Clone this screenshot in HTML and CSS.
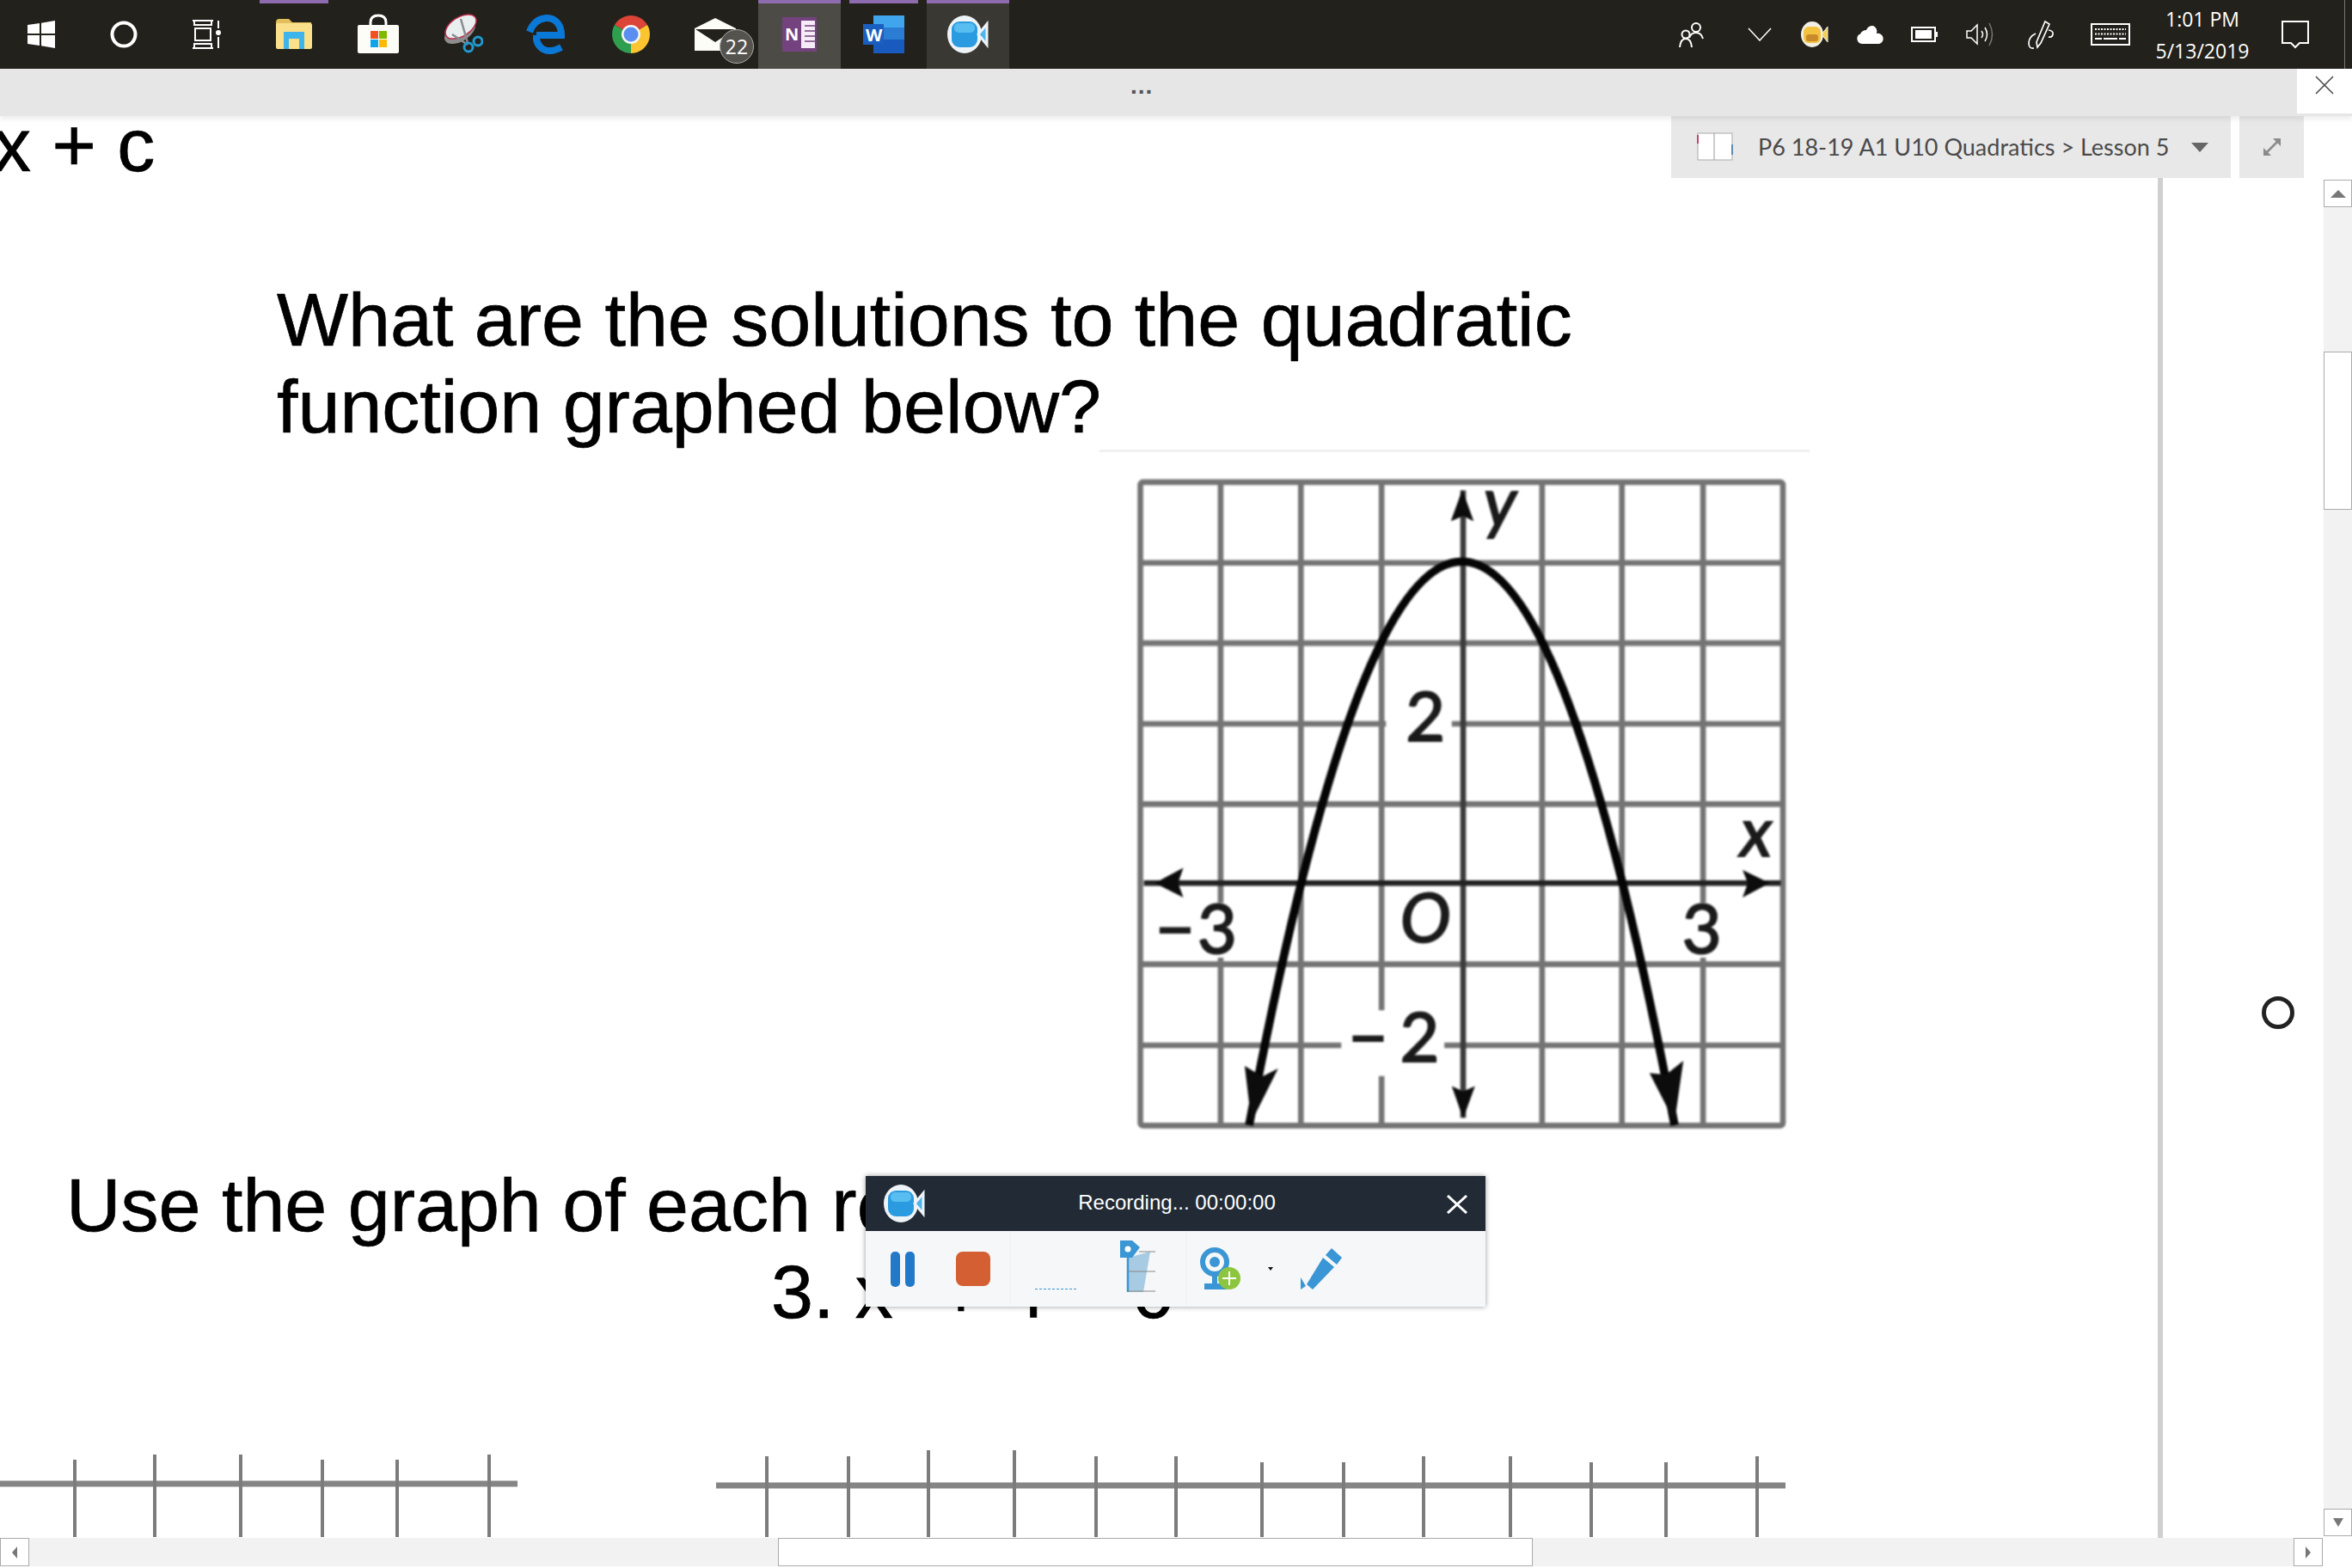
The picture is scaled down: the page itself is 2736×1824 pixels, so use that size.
FILE: index.html
```html
<!DOCTYPE html>
<html lang="en">
<head>
  <meta charset="UTF-8" />
  <title>OneNote - Lesson 5</title>
  <link rel="stylesheet" href="styles.css">
</head>
<body>
  <svg class="defs" width="0" height="0">
    <symbol id="rec-logo" viewBox="0 0 48 48">
      <ellipse cx="20" cy="24" rx="20" ry="22" fill="#eef3f7"/>
      <rect x="5" y="9" width="30" height="30" rx="9" fill="#2a9be0"/>
      <rect x="8" y="11" width="24" height="11" rx="5" fill="#58bdf0"/>
      <polygon points="36,24 46,12 46,36" fill="#4db4ec" stroke="#eef3f7" stroke-width="3"/>
    </symbol>
  </svg>

  <div class="app">
    <div class="taskbar">
      <div class="task-icon">
        <svg width="48" height="48" viewBox="0 0 48 48"><path fill="#fff" d="M8 13l14-2v12H8zM24 10.700l16-2.700v15H24zM8 25h14v12L8 35zM24 25h16v15l-16-2.700z"/></svg>
      </div>
      <div class="task-icon">
        <svg width="48" height="48" viewBox="0 0 48 48"><circle cx="24" cy="24" r="13.500" fill="none" stroke="#fff" stroke-width="4"/></svg>
      </div>
      <div class="task-icon">
        <svg width="48" height="48" viewBox="0 0 48 48" fill="none" stroke="#fff" stroke-width="2"><path d="M8 8h24M8 40h24M10 8v5h20V8M10 40v-5h20v5"/><rect x="11" y="17" width="18" height="14"/><path d="M38 8v9M38 27v13"/><circle cx="38" cy="22" r="2" fill="#fff"/></svg>
      </div>

      <div class="task-icon run first-pinned">
        <svg width="48" height="48" viewBox="0 0 48 48"><path fill="#e3bf5c" d="M3 10q0-4 4-4h11l4 4h22v6H3z"/><rect x="3" y="11" width="42" height="30" rx="2" fill="#fbe08c"/><path fill="#3fb4ea" d="M12 21h24v20h-6v-12H18v12h-6z"/></svg>
      </div>
      <div class="task-icon">
        <svg width="48" height="48" viewBox="0 0 48 48"><path fill="none" stroke="#fff" stroke-width="3" d="M15 18v-8q0-8 9-8t9 8v8"/><rect x="0" y="13" width="48" height="33" rx="2" fill="#fdfdf8"/><rect x="15" y="20" width="9" height="9" fill="#f25022"/><rect x="25" y="20" width="9" height="9" fill="#7fba00"/><rect x="15" y="30" width="9" height="9" fill="#0ea5e8"/><rect x="25" y="30" width="9" height="9" fill="#ffb900"/></svg>
      </div>
      <div class="task-icon">
        <svg width="48" height="48" viewBox="0 0 48 48"><ellipse cx="21" cy="21" rx="20" ry="11" transform="rotate(-32 21 21)" fill="#8d8d8d"/><ellipse cx="22" cy="15" rx="20" ry="11" transform="rotate(-32 22 15)" fill="#e9efef" stroke="#bb2f4c" stroke-width="1.500"/><path d="M22 6l8 28M12 24l18 12" stroke="#8a8a90" stroke-width="2.500" fill="none"/><circle cx="31" cy="39" r="5" fill="none" stroke="#1f9bd1" stroke-width="3"/><circle cx="42" cy="32" r="5" fill="none" stroke="#1f9bd1" stroke-width="3"/></svg>
      </div>
      <div class="task-icon">
        <svg width="48" height="48" viewBox="0 0 48 48" fill="none" stroke="#0a78d7" stroke-width="8"><path d="M12 25h29c0-13-8-21-18-20C13 6 7 13 4 21"/><path d="M12 25c-1 11 7 19 17 18 4 0 8-2 12-4"/></svg>
      </div>
      <div class="task-icon">
        <svg width="48" height="48" viewBox="0 0 48 48"><path fill="#db4437" d="M24 24L5 13A22 22 0 0 1 43 13z"/><path fill="#fbc52f" d="M24 24L43 13A22 22 0 0 1 24 46z"/><path fill="#2f9e4f" d="M24 24L24 46A22 22 0 0 1 5 13z"/><circle cx="24" cy="24" r="11" fill="#f4f4f4"/><circle cx="24" cy="24" r="8.500" fill="#5a8ef0"/></svg>
      </div>
      <div class="task-icon">
        <svg width="48" height="48" viewBox="0 0 48 48"><path fill="#fdfdf8" d="M0 17L24 5l24 12v26H0z"/><path fill="#23211b" d="M1 18h46L24 33z"/></svg>
        <span class="mail-badge">22</span>
      </div>
      <div class="task-icon run active">
        <svg width="48" height="48" viewBox="0 0 48 48"><rect x="4" y="4" width="40" height="40" fill="#73427f"/><rect x="26" y="8" width="16" height="32" fill="#f5ecf8"/><path d="M30 14h12M30 20h12M30 26h12M30 32h12" stroke="#73427f" stroke-width="1.500"/></svg>
        <span class="app-letter onenote-n">N</span>
      </div>
      <div class="task-icon run">
        <svg width="48" height="48" viewBox="0 0 48 48"><rect x="12" y="2" width="36" height="14" fill="#41a5ee"/><rect x="12" y="16" width="36" height="14" fill="#2b7cd3"/><rect x="12" y="30" width="36" height="16" fill="#185abd"/><rect x="0" y="12" width="24" height="24" fill="#1a5fc0"/></svg>
        <span class="app-letter word-w">W</span>
      </div>
      <div class="task-icon run active recorder-tab">
        <svg width="48" height="48"><use href="#rec-logo"/></svg>
      </div>

      <div class="tray">
        <div class="tray-slot people">
          <svg width="32" height="32" viewBox="0 0 32 32" fill="none" stroke="#fff" stroke-width="2"><circle cx="21" cy="8" r="5"/><path d="M13 20q2-6 8-6t8 7"/><circle cx="9" cy="16" r="4.500"/><path d="M2 31q1-10 7-10t7 10"/></svg>
        </div>
        <div class="tray-slot chevron">
          <svg width="28" height="16" viewBox="0 0 28 16" fill="none" stroke="#fff" stroke-width="1.500"><path d="M1 1l13 14L27 1"/></svg>
        </div>
        <div class="tray-slot">
          <svg width="32" height="30" viewBox="0 0 32 30"><ellipse cx="13" cy="15" rx="13" ry="15" fill="#f2f0e6"/><rect x="3" y="6" width="20" height="19" rx="6" fill="#f3c23f"/><rect x="6" y="15" width="14" height="8" rx="3" fill="#c98a2a"/><polygon points="24,15 31,6 31,24" fill="#f5cf55" stroke="#f2f0e6"/></svg>
        </div>
        <div class="tray-slot">
          <svg width="34" height="22" viewBox="0 0 34 22"><path fill="#fff" d="M8 22a6 6 0 0 1-2-11.500A8 8 0 0 1 13 6 8 8 0 0 1 21 1a7 7 0 0 1 4 9 6 6 0 0 1 3 12z"/></svg>
        </div>
        <div class="tray-slot">
          <svg width="32" height="18" viewBox="0 0 32 18"><rect x="1" y="1" width="27" height="16" fill="none" stroke="#fff" stroke-width="2"/><rect x="5" y="4" width="19" height="10" fill="#fff"/><rect x="29" y="6" width="2" height="6" fill="#fff"/></svg>
        </div>
        <div class="tray-slot">
          <svg width="32" height="30" viewBox="0 0 32 30" fill="none" stroke="#fff" stroke-width="1.500"><path d="M1 11h5l7-7v22l-7-7H1z"/><path d="M18 11q3 4 0 8M22 7q5 8 0 16"/><path d="M27 2q7 13 0 26" stroke="#777"/></svg>
        </div>
        <div class="tray-slot pen">
          <svg width="34" height="34" viewBox="0 0 34 34" fill="none" stroke="#fff" stroke-width="1.700"><path d="M21 2l5 3-10 22-4 5-1-6z"/><path d="M25 12q6 1 5 5t-5 3"/><path d="M10 16q-8 4-8 11t6 6"/></svg>
        </div>
        <div class="tray-slot keyboard">
          <svg width="46" height="26" viewBox="0 0 46 26" fill="none" stroke="#fff"><rect x="1" y="1" width="44" height="24" stroke-width="2"/><path d="M5 7h36M5 12.500h36" stroke-width="2" stroke-dasharray="2 1.500"/><path d="M5 18h8M15 18h16M33 18h8" stroke-width="2"/></svg>
        </div>
        <div class="clock">
          <div>1:01 PM</div>
          <div>5/13/2019</div>
        </div>
        <div class="tray-slot action">
          <svg width="34" height="34" viewBox="0 0 34 34" fill="none" stroke="#fff" stroke-width="2"><path d="M2 2h30v25H22l-5 5-5-5H2z"/></svg>
        </div>
        <div class="tray-end"></div>
      </div>
    </div>

    <div class="ribbon">
      <span class="ribbon-dots">...</span>
      <div class="ribbon-close">
        <svg width="22" height="22" viewBox="0 0 22 22" stroke="#444" stroke-width="1.500"><path d="M1 1l20 20M21 1L1 21"/></svg>
      </div>
    </div>

    <div class="main">
      <div class="canvas">
        <div class="page-text eq-top">x + c</div>
        <div class="page-text question">What are the solutions to the quadratic<br>function graphed below?</div>
        <div class="faint-rule"></div>

        <svg class="graph" width="800" height="800" viewBox="0 0 1568 1568">
          <g stroke="#747474" stroke-width="13" fill="none">
            <rect x="52" y="41" width="1465" height="1467" rx="6"/>
            <path d="M235 45v1460M418 45v1460M602 45v1460M968 45v1460M1150 45v1460M1335 45v1460"/>
            <path d="M52 225h1465M52 408h1465M52 592h1465M52 775h1465M52 1140h1465M52 1325h1465"/>
          </g>
          <g fill="#fff">
            <rect x="612" y="515" width="150" height="130"/>
            <rect x="85" y="1000" width="190" height="125"/>
            <rect x="640" y="985" width="125" height="120"/>
            <rect x="1290" y="1000" width="85" height="125"/>
            <rect x="510" y="1245" width="235" height="150"/>
          </g>
          <path d="M788 60V1490" stroke="#3c3c3c" stroke-width="13"/>
          <path d="M60 955H1512" stroke="#222" stroke-width="13"/>
          <path d="M300 1507Q785 -1063 1270 1507" fill="none" stroke="#050505" stroke-width="19"/>
          <g fill="#0c0c0c">
            <polygon points="786,58 760,130 788,118 812,130"/>
            <polygon points="788,1492 762,1418 788,1430 815,1418"/>
            <polygon points="85,955 150,920 138,955 150,988"/>
            <polygon points="1487,955 1425,925 1437,955 1425,988"/>
            <polygon points="305,1500 290,1372 330,1396 366,1378"/>
            <polygon points="1270,1500 1213,1388 1250,1392 1290,1360"/>
          </g>
          <g class="graph-label">
            <text x="702" y="632" text-anchor="middle">2</text>
            <text x="278" y="1115" text-anchor="end" letter-spacing="6">−3</text>
            <text x="1332" y="1115" text-anchor="middle">3</text>
            <text x="762" y="1362" text-anchor="end" letter-spacing="28">−2</text>
          </g>
          <g class="graph-label graph-var">
            <text x="702" y="1090" text-anchor="middle">O</text>
            <text x="872" y="142" text-anchor="middle">y</text>
            <text x="1456" y="893" text-anchor="middle">x</text>
          </g>
        </svg>

        <div class="page-text use-graph">Use the graph of each related function</div>
        <div class="page-text exercise">3. x<sup>2</sup> + 4 = 0</div>

        <svg class="number-line" width="2100" height="110" viewBox="0 0 2100 110">
          <g stroke="#858585" stroke-width="7"><path d="M0 43H602"/><path d="M833 45H2077"/></g>
          <g stroke="#7c7c7c" stroke-width="4" fill="none">
            <path d="M87 15V105M180 9V105M280 9V105M375 15V105M462 15V105M569 9V105"/>
            <path d="M892 11V105M987 11V105M1080 4V105M1180 4V105M1275 11V105M1368 11V105M1468 18V105M1563 18V105M1656 11V105M1757 11V105M1851 18V105M1938 18V105M2044 11V105"/>
          </g>
        </svg>

        <div class="margin-line"></div>
        <div class="ink-dot"></div>

        <div class="note-bar">
          <div class="note-pill">
            <svg class="note-book" width="42" height="34" viewBox="0 0 42 34"><rect x="1" y="1" width="40" height="31" fill="#fff" stroke="#aaa"/><path d="M20 1v31" stroke="#999"/><rect x="0" y="3" width="2" height="10" fill="#c2476a"/><rect x="40" y="14" width="2" height="12" fill="#5f8cae"/></svg>
            <span class="note-title">P6 18-19 A1 U10 Quadratics &gt; Lesson 5</span>
            <span class="note-caret"></span>
          </div>
          <div class="note-expand">
            <svg width="22" height="22" viewBox="0 0 22 22" fill="#8a8a8a"><path d="M3 19L19 3" stroke="#8a8a8a" stroke-width="2.500"/><path d="M12 1h9v9zM1 12v9h9z"/></svg>
          </div>
        </div>
      </div>

      <div class="vbar">
        <div class="sb-btn sb-btn-v"><span class="tri tri-up"></span></div>
        <div class="vbar-track"><div class="vbar-thumb"></div></div>
        <div class="sb-btn sb-btn-v"><span class="tri tri-down"></span></div>
      </div>
    </div>

    <div class="hbar">
      <div class="sb-btn sb-btn-h"><span class="tri tri-left"></span></div>
      <div class="hbar-track"><div class="hbar-thumb"></div></div>
      <div class="sb-btn sb-btn-h"><span class="tri tri-right"></span></div>
      <div class="hbar-corner"></div>
    </div>

    <div class="recorder">
      <div class="recorder-head">
        <svg class="recorder-logo" width="48" height="48"><use href="#rec-logo"/></svg>
        <span class="recorder-status">Recording... 00:00:00</span>
        <svg class="recorder-close" width="26" height="22" viewBox="0 0 26 22" stroke="#fff" stroke-width="3"><path d="M2 1l22 20M24 1L2 21"/></svg>
      </div>
      <div class="recorder-body">
        <div class="rec-group rec-controls">
          <div class="rec-pause"><span></span><span></span></div>
          <div class="rec-stop"></div>
        </div>
        <div class="rec-group rec-audio">
          <div class="rec-level"></div>
          <svg class="rec-flag" width="42" height="62" viewBox="0 0 42 62"><polygon points="9,20 35,13 27,60 9,60" fill="#a8cbe4"/><path d="M0 0h14l9 8-9 12H0z" fill="#3a96d4"/><circle cx="9" cy="10" r="3.500" fill="#fff"/><path d="M9 20v40" stroke="#3a96d4" stroke-width="2.500"/><path d="M22 13h19M9 36h32M9 59h32" stroke="#888"/></svg>
        </div>
        <div class="rec-group rec-tools">
          <svg width="48" height="50" viewBox="0 0 48 50"><circle cx="17" cy="17" r="14" fill="none" stroke="#3a96d4" stroke-width="6"/><circle cx="17" cy="17" r="6" fill="#3a96d4"/><rect x="14" y="30" width="6" height="14" fill="#3a96d4"/><rect x="5" y="42" width="26" height="7" fill="#3a96d4"/><circle cx="34" cy="36" r="13" fill="#8cc63f"/><path d="M34 28v16M26 36h16" stroke="#fff" stroke-width="2"/></svg>
          <span class="rec-caret"></span>
          <svg width="48" height="48" viewBox="0 0 48 48" fill="#3a96d4"><path d="M36 0l12 11-6 8-13-11z"/><path d="M26 11l13 11-25 26-7-6z"/><path d="M0 34l6 10-6 4z"/></svg>
        </div>
      </div>
    </div>
  </div>
</body>
</html>
```

FILE: styles.css
```css
* {
  box-sizing: border-box;
}

html, body {
  margin: 0;
  padding: 0;
  background: #fff;
}

body {
  font-family: 'Liberation Sans', Arial, sans-serif;
}

.defs {
  position: absolute;
}

.app {
  position: relative;
  width: 2736px;
  height: 1824px;
  display: flex;
  flex-direction: column;
  overflow: hidden;
}

/* taskbar */

.taskbar {
  height: 80px;
  flex: none;
  display: flex;
  background: #23211b;
}

.task-icon {
  position: relative;
  width: 96px;
  height: 80px;
  display: flex;
  align-items: center;
  justify-content: center;
}

.first-pinned {
  margin-left: 6px;
}

.first-pinned ~ .task-icon {
  margin-left: 2px;
}

.run::before {
  content: "";
  position: absolute;
  top: 0;
  left: 8px;
  right: 8px;
  height: 4px;
  background: #8e6aae;
}

.active {
  background: #4d4b45;
}

.active::before {
  left: 0;
  right: 0;
}

.recorder-tab {
  background: #3a3832;
}

.mail-badge {
  position: absolute;
  z-index: 1;
  left: 53px;
  top: 34px;
  width: 40px;
  height: 40px;
  border-radius: 50%;
  background: #55534e;
  border: 1px solid #aaa;
  color: #fff;
  font-family: 'Open Sans', sans-serif;
  font-size: 23px;
  line-height: 38px;
  text-align: center;
}

.app-letter {
  position: absolute;
  color: #fff;
  font-family: 'Open Sans', sans-serif;
  font-weight: 700;
  font-size: 20px;
}

.onenote-n {
  left: 31px;
  top: 26px;
}

.word-w {
  left: 27px;
  top: 27px;
}

.tray {
  margin-left: auto;
  display: flex;
  align-items: center;
}

.tray-slot {
  width: 64px;
  height: 80px;
  display: flex;
  align-items: center;
  justify-content: center;
}

.chevron {
  margin-left: 15px;
}

.pen {
  margin-left: 8px;
}

.keyboard {
  margin-left: 16px;
}

.clock {
  width: 124px;
  margin-left: 13px;
  padding-top: 1px;
  color: #fff;
  font-family: 'Open Sans', sans-serif;
  font-size: 23px;
  line-height: 37px;
  text-align: center;
}

.action {
  margin-left: 14px;
}

.tray-end {
  width: 34px;
  height: 80px;
  position: relative;
}

.tray-end::after {
  content: "";
  position: absolute;
  left: 25px;
  top: 0;
  width: 1px;
  height: 80px;
  background: #777;
}

/* grey strip under the taskbar */

.ribbon {
  position: relative;
  z-index: 3;
  height: 55px;
  flex: none;
  background: #e6e6e6;
  box-shadow: 0 4px 6px rgba(0, 0, 0, 0.07);
}

.ribbon-dots {
  position: absolute;
  left: 1315px;
  top: 4px;
  font-size: 28px;
  font-weight: 700;
  letter-spacing: 1px;
  color: #555;
}

.ribbon-close {
  position: absolute;
  right: 0;
  top: 0;
  width: 64px;
  height: 52px;
  background: #fff;
  display: flex;
  align-items: center;
  justify-content: center;
  padding-bottom: 14px;
}

/* page */

.main {
  flex: 1;
  display: flex;
  min-height: 0;
}

.canvas {
  position: relative;
  flex: 1;
  overflow: hidden;
}

.page-text {
  position: absolute;
  font-size: 88px;
  line-height: 101px;
  color: #000;
  white-space: nowrap;
  -webkit-text-stroke: 0.7px #000;
  filter: blur(0.5px);
}

.page-text sup {
  font-size: 52px;
  line-height: 0;
}

.eq-top {
  left: -8px;
  top: -17px;
}

.question {
  left: 322px;
  top: 186px;
}

.use-graph {
  left: 77px;
  top: 1216px;
}

.exercise {
  left: 897px;
  top: 1317px;
}

.faint-rule {
  position: absolute;
  left: 1279px;
  top: 388px;
  width: 826px;
  height: 3px;
  background: #f0f0f0;
}

.graph {
  position: absolute;
  left: 1300px;
  top: 405px;
  filter: blur(1.1px);
}

.graph-label text {
  font-family: Lato, sans-serif;
  font-size: 155px;
  fill: #1a1a1a;
  stroke: #1a1a1a;
  stroke-width: 4px;
}

.graph-var text {
  font-style: italic;
}

.number-line {
  position: absolute;
  left: 0;
  top: 1548px;
  filter: blur(0.6px);
}

.margin-line {
  position: absolute;
  left: 2510px;
  top: 72px;
  bottom: 0;
  width: 6px;
  background: #d0d0d0;
}

.ink-dot {
  position: absolute;
  left: 2631px;
  top: 1024px;
  width: 38px;
  height: 38px;
  border: 5px solid #222;
  border-radius: 50%;
}

.note-bar {
  position: absolute;
  top: 0;
  right: 23px;
  display: flex;
  gap: 10px;
}

.note-pill {
  width: 651px;
  height: 72px;
  background: #e8e8e8;
  display: flex;
  align-items: center;
  padding-left: 30px;
}

.note-book {
  flex: none;
}

.note-title {
  margin-left: 29px;
  margin-top: -2px;
  color: #4a4a4a;
  font-family: Lato, sans-serif;
  font-size: 27px;
  white-space: nowrap;
}

.note-caret {
  margin-left: auto;
  margin-right: 26px;
  border-left: 10px solid transparent;
  border-right: 10px solid transparent;
  border-top: 11px solid #666;
}

.note-expand {
  width: 75px;
  height: 72px;
  background: #e8e8e8;
  display: flex;
  align-items: center;
  justify-content: center;
}

/* scrollbars */

.vbar {
  width: 33px;
  flex: none;
  display: flex;
  flex-direction: column;
  padding: 74px 0 2px;
}

.vbar-track {
  flex: 1;
  background: #f2f2f2;
  padding-top: 168px;
}

.vbar-thumb {
  height: 184px;
  background: #fff;
  border: 1px solid #aaa;
}

.hbar {
  height: 35px;
  flex: none;
  display: flex;
  padding-bottom: 2px;
}

.hbar-track {
  flex: 1;
  background: #f2f2f2;
  padding-left: 871px;
}

.hbar-thumb {
  width: 878px;
  height: 100%;
  background: #fff;
  border: 1px solid #aaa;
}

.hbar-corner {
  width: 34px;
}

.sb-btn {
  flex: none;
  background: #fff;
  border: 1px solid #aaa;
  display: flex;
  align-items: center;
  justify-content: center;
}

.sb-btn-v {
  height: 32px;
}

.sb-btn-h {
  width: 34px;
}

.tri {
  width: 0;
  height: 0;
  border-style: solid;
  border-color: transparent;
}

.tri-up {
  border-width: 0 9px 9px;
  border-bottom-color: #777;
}

.tri-down {
  border-width: 10px 6px 0;
  border-top-color: #777;
}

.tri-left {
  border-width: 7px 6px 7px 0;
  border-right-color: #777;
}

.tri-right {
  border-width: 7px 0 7px 6px;
  border-left-color: #777;
}

/* recorder toolbar, floats over the page */

.recorder {
  position: absolute;
  z-index: 5;
  left: 1007px;
  top: 1368px;
  width: 721px;
  height: 152px;
  box-shadow: 0 0 6px rgba(0, 0, 0, 0.4);
}

.recorder-head {
  position: relative;
  height: 64px;
  background: #222b35;
  display: flex;
  align-items: center;
  justify-content: center;
  padding-bottom: 2px;
}

.recorder-logo {
  position: absolute;
  left: 21px;
  top: 8px;
}

.recorder-status {
  color: #fff;
  font-size: 24px;
  margin-left: 3px;
}

.recorder-close {
  position: absolute;
  right: 20px;
  top: 22px;
}

.recorder-body {
  height: 88px;
  background: #f5f7f8;
  display: flex;
}

.rec-group {
  display: flex;
  align-items: center;
  height: 88px;
}

.rec-controls {
  width: 169px;
  padding-left: 29px;
  gap: 48px;
  border-right: 1px solid #eef0f1;
}

.rec-pause {
  display: flex;
  gap: 6px;
}

.rec-pause span {
  width: 11px;
  height: 41px;
  border-radius: 5px;
  background: #2179c8;
}

.rec-stop {
  width: 40px;
  height: 40px;
  border-radius: 8px;
  background: #d45f33;
}

.rec-audio {
  width: 205px;
  border-right: 1px solid #eef0f1;
}

.rec-level {
  width: 48px;
  margin-left: 28px;
  margin-top: 46px;
  border-bottom: 1px dashed #3a96d4;
}

.rec-flag {
  margin-left: 51px;
  margin-top: -4px;
}

.rec-tools {
  padding-left: 15px;
}

.rec-caret {
  margin-left: 31px;
  margin-right: 32px;
  border-left: 3px solid transparent;
  border-right: 3px solid transparent;
  border-top: 4px solid #111;
}
```
